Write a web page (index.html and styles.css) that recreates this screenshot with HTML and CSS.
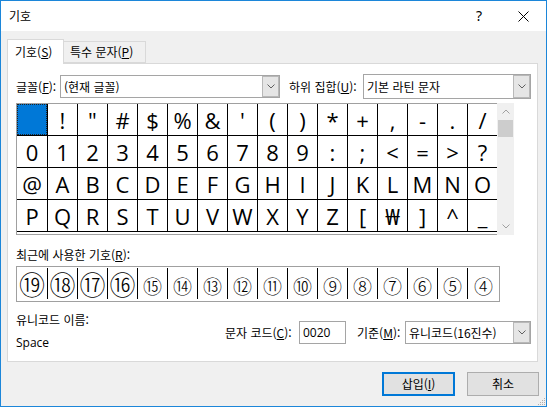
FILE: index.html
```html
<!DOCTYPE html>
<html lang="ko">
<head>
<meta charset="utf-8">
<title>기호</title>
<link rel="stylesheet" href="styles.css">
</head>
<body>
<div class="window">
  <div class="titlebar">
    <span class="title">기호</span>
    <span class="help">?</span>
    <svg class="close" width="11" height="11" viewBox="0 0 11 11"><path d="M0.5 0.5 L10.5 10.5 M10.5 0.5 L0.5 10.5" stroke="#000" stroke-width="1" fill="none"/></svg>
  </div>
  <div class="tabs">
    <div class="tab active">기호(<u>S</u>)</div>
    <div class="tab">특수 문자(<u>P</u>)</div>
  </div>
  <div class="panel">
    <div class="font-row">
      <span class="lbl lbl-font">글꼴(<u>F</u>):</span>
      <div class="combo combo-font">
        <span class="val">(현재 글꼴)</span>
        <span class="dd"><svg width="8" height="5" viewBox="0 0 8 5"><polyline points="0.5,0.5 4,4 7.5,0.5" stroke="#606060" fill="none"/></svg></span>
      </div>
      <span class="lbl lbl-subset">하위 집합(<u>U</u>):</span>
      <div class="combo combo-subset">
        <span class="val">기본 라틴 문자</span>
        <span class="dd"><svg width="8" height="5" viewBox="0 0 8 5"><polyline points="0.5,0.5 4,4 7.5,0.5" stroke="#606060" fill="none"/></svg></span>
      </div>
    </div>
    <div class="chars">
      <div class="grid">
        <div class="row">
          <span class="cell sel"></span><span class="cell">!</span><span class="cell">&quot;</span><span class="cell">#</span><span class="cell">$</span><span class="cell">%</span><span class="cell">&amp;</span><span class="cell">'</span><span class="cell">(</span><span class="cell">)</span><span class="cell">*</span><span class="cell">+</span><span class="cell">,</span><span class="cell">-</span><span class="cell">.</span><span class="cell">/</span>
        </div>
        <div class="row">
          <span class="cell">0</span><span class="cell">1</span><span class="cell">2</span><span class="cell">3</span><span class="cell">4</span><span class="cell">5</span><span class="cell">6</span><span class="cell">7</span><span class="cell">8</span><span class="cell">9</span><span class="cell">:</span><span class="cell">;</span><span class="cell">&lt;</span><span class="cell">=</span><span class="cell">&gt;</span><span class="cell">?</span>
        </div>
        <div class="row">
          <span class="cell">@</span><span class="cell">A</span><span class="cell">B</span><span class="cell">C</span><span class="cell">D</span><span class="cell">E</span><span class="cell">F</span><span class="cell">G</span><span class="cell">H</span><span class="cell">I</span><span class="cell">J</span><span class="cell">K</span><span class="cell">L</span><span class="cell">M</span><span class="cell">N</span><span class="cell">O</span>
        </div>
        <div class="row">
          <span class="cell">P</span><span class="cell">Q</span><span class="cell">R</span><span class="cell">S</span><span class="cell">T</span><span class="cell">U</span><span class="cell">V</span><span class="cell">W</span><span class="cell">X</span><span class="cell">Y</span><span class="cell">Z</span><span class="cell">[</span><span class="cell">₩</span><span class="cell">]</span><span class="cell">^</span><span class="cell">_</span>
        </div>
      </div>
      <div class="scrollbar">
        <span class="arrow"><svg width="8" height="5" viewBox="0 0 8 5"><polyline points="0.5,4.5 4,1 7.5,4.5" stroke="#a0a0a0" fill="none"/></svg></span>
        <span class="thumb"></span>
        <span class="track"></span>
        <span class="arrow"><svg width="8" height="5" viewBox="0 0 8 5"><polyline points="0.5,0.5 4,4 7.5,0.5" stroke="#a0a0a0" fill="none"/></svg></span>
      </div>
    </div>
    <div class="recent-label">최근에 사용한 기호(<u>R</u>):</div>
    <div class="recent">
      <span class="rcell big">⑲</span><span class="rcell big">⑱</span><span class="rcell big">⑰</span><span class="rcell big">⑯</span><span class="rcell">⑮</span><span class="rcell">⑭</span><span class="rcell">⑬</span><span class="rcell">⑫</span><span class="rcell">⑪</span><span class="rcell">⑩</span><span class="rcell">⑨</span><span class="rcell">⑧</span><span class="rcell">⑦</span><span class="rcell">⑥</span><span class="rcell">⑤</span><span class="rcell">④</span>
    </div>
    <div class="bottom">
      <div class="name-col">
        <div>유니코드 이름:</div>
        <div class="name">Space</div>
      </div>
      <div class="code-group">
        <span class="lbl lbl-code">문자 코드(<u>C</u>):</span>
        <span class="textbox">0020</span>
        <span class="lbl lbl-base">기준(<u>M</u>):</span>
        <div class="combo combo-base">
          <span class="val">유니코드(16진수)</span>
          <span class="dd"><svg width="8" height="5" viewBox="0 0 8 5"><polyline points="0.5,0.5 4,4 7.5,0.5" stroke="#606060" fill="none"/></svg></span>
        </div>
      </div>
    </div>
  </div>
  <div class="buttons">
    <button class="btn primary">삽입(<u>I</u>)</button>
    <button class="btn">취소</button>
  </div>
  <svg class="grip" width="10" height="10" viewBox="0 0 10 10">
    <rect x="8" y="2" width="1" height="1" fill="#b0b0b0"/>
    <rect x="6" y="4" width="1" height="1" fill="#b0b0b0"/>
    <rect x="8" y="4" width="1" height="1" fill="#b0b0b0"/>
    <rect x="4" y="6" width="1" height="1" fill="#b0b0b0"/>
    <rect x="6" y="6" width="1" height="1" fill="#b0b0b0"/>
    <rect x="8" y="6" width="1" height="1" fill="#b0b0b0"/>
    <rect x="2" y="8" width="1" height="1" fill="#b0b0b0"/>
    <rect x="4" y="8" width="1" height="1" fill="#b0b0b0"/>
    <rect x="6" y="8" width="1" height="1" fill="#b0b0b0"/>
    <rect x="8" y="8" width="1" height="1" fill="#b0b0b0"/>
  </svg>
</div>
</body>
</html>
```

FILE: styles.css
```css
* { box-sizing: border-box; }
html, body { margin: 0; padding: 0; }
body {
  width: 547px;
  height: 407px;
  overflow: hidden;
  background: #fff;
  color: #000;
  font-family: "Noto Sans CJK KR", "Noto Sans", sans-serif;
  font-size: 12px;
}
u { text-decoration: underline; text-underline-offset: 1px; }

.window {
  position: relative;
  width: 547px;
  height: 407px;
  border: 1px solid #1c86d9;
  background: #f0f0f0;
  display: flex;
  flex-direction: column;
}

.titlebar {
  flex: none;
  height: 30px;
  background: #fff;
  display: flex;
  align-items: center;
}
.title { margin-left: 8px; line-height: 16px; }
.help {
  margin-left: auto;
  width: 10px;
  text-align: center;
  font-family: "Noto Sans", sans-serif;
  font-size: 14px;
  line-height: 16px;
}
.close { margin-left: 34px; margin-right: 17px; display: block; }

.tabs {
  flex: none;
  display: flex;
  align-items: flex-end;
  height: 24px;
  margin-top: 8px;
  padding-left: 6px;
}
.tab {
  height: 22px;
  padding-left: 6px;
  width: 82px;
  border: 1px solid #d9d9d9;
  border-left: none;
  background: #f0f0f0;
  line-height: 20px;
}
.tab.active {
  position: relative;
  z-index: 1;
  width: 57px;
  height: 25px;
  margin-bottom: -1px;
  padding-left: 7px;
  border-left: 1px solid #d9d9d9;
  border-bottom: none;
  background: #fff;
  line-height: 24px;
}

.panel {
  flex: none;
  margin-left: 6px;
  width: 531px;
  height: 299px;
  background: #fff;
  border: 1px solid #d9d9d9;
  padding: 10px 6px 0 8px;
  display: flex;
  flex-direction: column;
}

.font-row {
  display: flex;
  align-items: center;
  height: 25px;
}
.lbl { flex: none; white-space: nowrap; line-height: 16px; }
.lbl-font { width: 44px; }
.lbl-subset { width: 74px; margin-left: 9px; }

.combo {
  flex: none;
  display: flex;
  height: 23px;
  border: 1px solid #a5a5a5;
  background: #fff;
}
.combo .val {
  flex: 1;
  padding-left: 3px;
  line-height: 21px;
  white-space: nowrap;
  overflow: hidden;
}
.combo .dd {
  flex: none;
  width: 17px;
  background: #e5e5e5;
  border: 1px solid #b8b8b8;
  display: flex;
  align-items: center;
  justify-content: center;
}
.combo-font { width: 220px; }
.combo-subset { width: 168px; height: 25px; }
.combo-subset .val { line-height: 23px; }

.chars {
  display: flex;
  margin-top: 4px;
}
.grid {
  width: 481px;
  border: 1px solid #a0a0a0;
  border-right: none;
  padding-bottom: 2px;
}
.row {
  display: flex;
  height: 32px;
  border-bottom: 1px solid #000;
}
.cell {
  width: 30px;
  border-left: 1px solid #000;
  display: flex;
  align-items: center;
  justify-content: center;
  font-family: "Open Sans", "Noto Sans", "DejaVu Sans", sans-serif;
  font-size: 22px;
  line-height: 1;
}
.cell:first-child { border-left: none; }
.cell.sel {
  background: #0078d7;
  outline: 1px dotted #222;
  outline-offset: -1px;
}

.scrollbar {
  width: 17px;
  height: 132px;
  background: #f0f0f0;
  display: flex;
  flex-direction: column;
}
.scrollbar .arrow {
  flex: none;
  height: 17px;
  display: flex;
  align-items: center;
  justify-content: center;
}
.scrollbar .thumb {
  flex: none;
  height: 17px;
  margin: 0 1px;
  background: #cdcdcd;
}
.scrollbar .track { flex: 1; }

.recent-label {
  margin-top: 12px;
  line-height: 16px;
}
.recent {
  display: flex;
  width: 484px;
  height: 36px;
  margin-top: 3px;
  border: 1px solid #a0a0a0;
  padding: 1px 0 2px;
}
.rcell {
  width: 30px;
  flex: none;
  border-left: 1px solid #000;
  display: flex;
  align-items: center;
  justify-content: center;
  font-family: "Noto Sans CJK KR", sans-serif;
  font-weight: 300;
  font-size: 19px;
  line-height: 1;
  padding-top: 4px;
}
.rcell:first-child { border-left: none; }
.rcell:last-child { flex: 1; }
.rcell.big { font-size: 26px; padding-top: 0; }

.bottom {
  display: flex;
  align-items: flex-start;
  margin-top: 10px;
}
.name-col { line-height: 16px; }
.name-col .name {
  margin-top: 7px;
  font-family: "Open Sans", "Noto Sans", sans-serif;
}
.code-group {
  margin-left: auto;
  margin-top: 9px;
  display: flex;
  align-items: center;
  height: 23px;
}
.lbl-code { width: 74px; }
.lbl-base { width: 48px; margin-left: 11px; }
.textbox {
  flex: none;
  width: 47px;
  height: 23px;
  border: 1px solid #a5a5a5;
  padding-left: 3px;
  line-height: 21px;
  font-family: "Open Sans", "Noto Sans", sans-serif;
}
.combo-base { width: 126px; }

.buttons {
  flex: none;
  display: flex;
  justify-content: flex-end;
  gap: 12px;
  margin-top: 10px;
  padding-right: 7px;
}
.btn {
  width: 72px;
  height: 24px;
  margin: 0;
  padding: 0;
  border: 1px solid #adadad;
  background: #e1e1e1;
  color: #000;
  font-family: "Noto Sans CJK KR", "Noto Sans", sans-serif;
  font-size: 12px;
  line-height: 20px;
}
.btn.primary {
  width: 73px;
  border: 2px solid #0078d7;
}

.grip {
  position: absolute;
  right: 0;
  bottom: 0;
}
```
